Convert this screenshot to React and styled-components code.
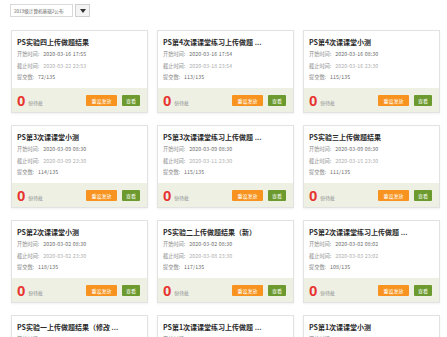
import React from "react";
import styled, { createGlobalStyle } from "styled-components";

const GlobalStyle = createGlobalStyle`
  body {
    margin: 0;
    background: #ffffff;
    font-family: "Noto Sans CJK SC", "Noto Sans", sans-serif;
  }
`;

const Page = styled.div`
  padding: 4px 8px 0 10px;
`;

const SelectBox = styled.div`
  display: flex;
  align-items: stretch;
  height: 13px;
  width: 80px;
`;

const SelectText = styled.div`
  flex: 1;
  border: 1px solid #d9d9d9;
  font-size: 4.6px;
  color: #666;
  display: flex;
  align-items: center;
  padding-left: 3px;
`;

const SelectButton = styled.div`
  width: 13px;
  margin-left: 2px;
  border: 1px solid #cfcfcf;
  background: #f4f4f4;
  display: flex;
  align-items: center;
  justify-content: center;
`;

const Grid = styled.div`
  display: grid;
  grid-template-columns: repeat(3, 137px);
  column-gap: 9px;
  row-gap: 12px;
  margin-top: 13px;
  margin-left: 1px;
`;

const Card = styled.div`
  height: 83px;
  border: 1px solid #e2e2e2;
  box-shadow: 0 1px 2px rgba(0, 0, 0, 0.06);
  display: flex;
  flex-direction: column;
  box-sizing: border-box;
`;

const Body = styled.div`
  flex: 1;
  padding: 6px 5px 0 5px;
`;

const Title = styled.div`
  font-size: 7px;
  font-weight: 700;
  color: #2a2a2a;
  line-height: 11px;
  white-space: nowrap;
  overflow: hidden;
`;

const Meta = styled.div`
  font-size: 5.2px;
  color: #8a8a8a;
  line-height: 11.7px;
  white-space: nowrap;
`;

const Value = styled.span`
  color: ${(p) => (p.$light ? "#adadad" : "#6a6a6a")};
  margin-left: 4px;
  letter-spacing: 0.15px;
`;

const Footer = styled.div`
  height: 24px;
  background: #eef0e4;
  display: flex;
  align-items: center;
  padding: 0 7px 0 5px;
`;

const Count = styled.span`
  font-family: "Liberation Sans", Arial, sans-serif;
  font-size: 15px;
  font-weight: 700;
  color: #e8322d;
  line-height: 1;
`;

const CountLabel = styled.span`
  font-size: 4.8px;
  color: #888;
  margin-left: 3px;
  margin-top: 4px;
  flex: 1;
`;

const Button = styled.div`
  height: 11px;
  padding: 0 ${(p) => (p.$wide ? 5.5 : 4)}px;
  background: ${(p) => p.$bg};
  color: #fff;
  font-size: 5px;
  display: flex;
  align-items: center;
  justify-content: center;
  margin-left: ${(p) => (p.$gap ? 5 : 0)}px;
  border-radius: 1px;
`;

const tasks = [
  ["PS实验四上传做题结果", "2020-03-16 17:55", "2020-03-22 23:53", "72/135"],
  ["PS第4次课课堂练习上传做题 ...", "2020-03-16 17:54", "2020-03-18 23:54", "113/135"],
  ["PS第4次课课堂小测", "2020-03-16 08:30", "2020-03-16 23:30", "115/135"],
  ["PS第3次课课堂小测", "2020-03-09 08:30", "2020-03-09 23:30", "114/135"],
  ["PS第3次课课堂练习上传做题 ...", "2020-03-09 08:30", "2020-03-11 23:30", "115/135"],
  ["PS实验三上传做题结果", "2020-03-09 08:30", "2020-03-15 23:30", "111/135"],
  ["PS第2次课课堂小测", "2020-03-02 08:30", "2020-03-02 23:30", "118/135"],
  ["PS实验二上传做题结果（新）", "2020-03-02 08:30", "2020-03-08 23:30", "117/135"],
  ["PS第2次课课堂练习上传做题 ...", "2020-03-02 08:02", "2020-03-03 23:02", "108/135"],
  ["PS实验一上传做题结果（修改 ...", "2020-02-24 08:30", "2020-03-01 23:30", "120/135"],
  ["PS第1次课课堂练习上传做题 ...", "2020-02-24 08:30", "2020-02-26 23:30", "119/135"],
  ["PS第1次课课堂小测", "2020-02-24 08:30", "2020-02-24 23:30", "121/135"],
];

function App() {
  return (
    <Page>
      <GlobalStyle />
      <SelectBox>
        <SelectText>2019级计算机基础2公布</SelectText>
        <SelectButton>
          <svg width="6" height="4" viewBox="0 0 6 4">
            <path d="M0 0 L6 0 L3 4 Z" fill="#333" />
          </svg>
        </SelectButton>
      </SelectBox>
      <Grid>
        {tasks.map(([title, start, end, count], i) => (
          <Card key={i}>
            <Body>
              <Title>{title}</Title>
              <Meta>
                开始时间:<Value>{start}</Value>
              </Meta>
              <Meta>
                截止时间:<Value $light>{end}</Value>
              </Meta>
              <Meta>
                提交数:<Value>{count}</Value>
              </Meta>
            </Body>
            <Footer>
              <Count>0</Count>
              <CountLabel>份待批</CountLabel>
              <Button $bg="#f7931e" $wide>重设发放</Button>
              <Button $bg="#6c9a2e" $gap>查看</Button>
            </Footer>
          </Card>
        ))}
      </Grid>
    </Page>
  );
}

export default App;
